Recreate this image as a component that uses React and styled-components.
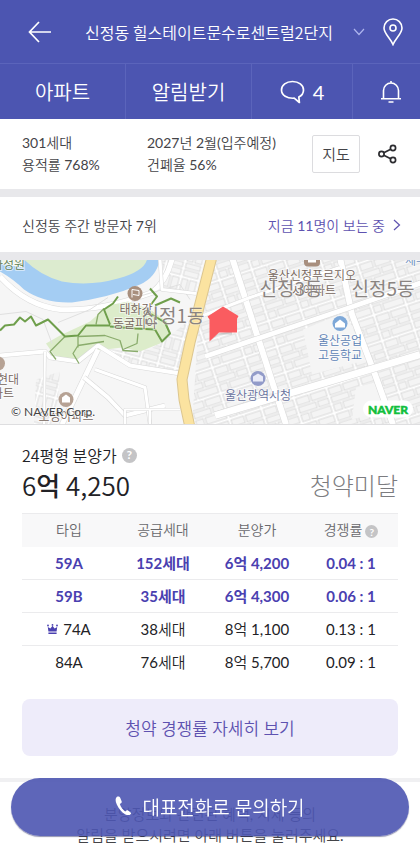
import React from "react";
import styled, { createGlobalStyle, css } from "styled-components";

const colors = {
  header: "#4c55b1",
  headerLine: "#5b64bb",
  primary: "#4a40b0",
  violet: "#5e52b0",
  text: "#444448",
  black: "#222226",
  gray: "#7c7c80",
  line: "#ebebed",
  band: "#e8e8eb"
};

const sans = `"Noto Sans CJK KR DemiLight", "Noto Sans CJK KR", sans-serif`;
const lato = `Lato, "Noto Sans CJK KR DemiLight", "Noto Sans CJK KR", sans-serif`;
const latoBold = `Lato, "Noto Sans CJK KR", sans-serif`;

const GlobalStyle = createGlobalStyle`
  * {
    box-sizing: border-box;
  }

  body {
    margin: 0;
    background: #fff;
    color: ${colors.black};
    font-family: ${lato};
    overflow-x: hidden;
  }

  button {
    font: inherit;
    color: inherit;
    padding: 0;
    border: 0;
    background: none;
    cursor: pointer;
  }

  a {
    color: inherit;
    text-decoration: none;
  }
`;

const Page = styled.div`
  height: 100vh;
  overflow: hidden;
`;

const Header = styled.header`
  background: ${colors.header};
  color: #fff;
  font-family: ${sans};
`;

const TitleBar = styled.div`
  display: flex;
  align-items: center;
  justify-content: space-between;
  height: 63px;
  padding: 0 16px 0 28px;
`;

const IconButton = styled.button`
  display: flex;
  align-items: center;
  justify-content: center;
`;

const TitleButton = styled.button`
  display: flex;
  align-items: center;
  gap: 20px;
  margin-left: 16px;
  font-size: 16px;
  line-height: 24px;
`;

const Tabs = styled.nav`
  display: grid;
  grid-template-columns: 125fr 126fr 101fr 68fr;
  height: 56px;
  border-top: 1px solid ${colors.headerLine};
`;

const Tab = styled.a`
  display: flex;
  align-items: center;
  justify-content: center;
  gap: 8px;
  padding-left: ${({ $last }) => ($last ? "8px" : 0)};
  font-size: 20px;
  font-family: ${({ $latin }) => ($latin ? lato : sans)};

  & + & {
    border-left: 1px solid ${colors.headerLine};
  }
`;

const Summary = styled.section`
  display: flex;
  align-items: center;
  height: 70px;
  padding: 0 22px;
  color: ${colors.text};
  font-size: 14px;
  line-height: 22px;
`;

const SummaryColumn = styled.div`
  flex: ${({ $grow }) => ($grow ? "1" : "0 0 125px")};
  white-space: nowrap;
`;

const MapButton = styled.button`
  width: 48px;
  height: 38px;
  margin-right: 18px;
  border: 1px solid #dcdcdf;
  border-radius: 2px;
  font-size: 15px;
`;

const Band = styled.div`
  height: 8px;
  background: ${colors.band};
`;

const Visitors = styled.section`
  display: flex;
  align-items: center;
  justify-content: space-between;
  height: 55px;
  padding: 0 19px 0 22px;
  color: ${colors.text};
  font-size: 14px;
`;

const ViewersLink = styled.a`
  display: flex;
  align-items: center;
  gap: 8px;
  color: ${colors.violet};
`;

const MapBox = styled.section`
  height: 165px;
  border-bottom: 1px solid #dedee0;

  svg {
    display: block;
    width: 100%;
    height: 100%;
  }
`;

const Label = styled.text`
  font-family: ${sans};
  font-size: 12px;
  fill: ${({ $color }) => $color || "#75645b"};
  text-anchor: ${({ $anchor }) => $anchor || "middle"};
  paint-order: stroke;
  stroke: #fff;
  stroke-width: 2px;
  stroke-opacity: 0.6;
`;

const District = styled(Label)`
  font-family: "Noto Sans CJK KR", sans-serif;
  font-size: 19px;
  fill: #8a8481;
  stroke-opacity: 0.3;
`;

const Copyright = styled(Label)`
  font-family: ${lato};
  fill: #444;
  text-anchor: start;
`;

const NaverText = styled.text`
  font-family: Lato, sans-serif;
  font-size: 12px;
  font-weight: 900;
  fill: #12bf3d;
  stroke: #12bf3d;
  stroke-width: 0.5px;
  text-anchor: middle;
`;

const Pricing = styled.section`
  padding: 18px 22px 22px;
`;

const PriceTitle = styled.h2`
  display: flex;
  align-items: center;
  gap: 5px;
  margin: 0;
  font-family: ${sans};
  font-size: 16px;
  font-weight: 400;
  line-height: 24px;
`;

const HelpButton = styled.button`
  display: inline-flex;
  align-items: center;
  justify-content: center;
  width: ${({ $small }) => ($small ? "13px" : "15px")};
  height: ${({ $small }) => ($small ? "13px" : "15px")};
  margin-left: ${({ $small }) => ($small ? "3px" : 0)};
  border-radius: 50%;
  background: #c4c4c6;
  color: #fff;
  font-family: ${latoBold};
  font-size: ${({ $small }) => ($small ? "10px" : "12px")};
  font-weight: 700;
  line-height: 12px;
  vertical-align: middle;
`;

const PriceRow = styled.div`
  display: flex;
  align-items: center;
  justify-content: space-between;
  height: 34px;
  margin-bottom: 12px;
  font-family: ${sans};
  font-size: 26px;
`;

const Price = styled.p`
  margin: 0;

  b {
    font-family: "Noto Sans CJK KR", sans-serif;
    font-weight: 500;
  }
`;

const Status = styled.p`
  margin: 0;
  color: ${colors.gray};
  font-family: "Noto Sans CJK KR", sans-serif;
  font-size: 24px;
  font-weight: 300;
`;

const Table = styled.table`
  width: 100%;
  border-collapse: collapse;
  table-layout: fixed;
  font-size: 15px;
  line-height: 20px;
  text-align: center;
`;

const HeadCell = styled.th`
  height: 33px;
  padding: 0;
  border-top: 1px solid ${colors.line};
  background: #f8f8f9;
  color: #69696d;
  font-size: 14px;
  font-weight: 400;
`;

const Row = styled.tr`
  border-bottom: 1px solid ${colors.line};
  ${({ $strong }) =>
    $strong &&
    css`
      color: ${colors.primary};
      font-family: ${latoBold};
      font-weight: 700;
    `};

  &:last-child {
    border-bottom: 0;
  }
`;

const Cell = styled.td`
  height: 33px;
  padding: 0;

  svg {
    margin-right: 5px;
  }
`;

const DetailButton = styled.button`
  width: 100%;
  height: 57px;
  margin-top: 20px;
  border-radius: 8px;
  background: #eeecfa;
  color: ${colors.violet};
  font-size: 17px;
`;

const ThinBand = styled(Band)`
  height: 4px;
  background: #f0f0f2;
`;

const Notice = styled.p`
  margin: 0;
  padding-top: 22px;
  color: ${colors.text};
  font-size: 15px;
  line-height: 21px;
  text-align: center;
`;

const CallButton = styled.a`
  position: fixed;
  right: 11px;
  bottom: 9px;
  left: 11px;
  display: flex;
  align-items: center;
  justify-content: center;
  gap: 10px;
  height: 58px;
  padding-bottom: 2px;
  border-radius: 29px;
  background: rgba(76, 85, 177, 0.9);
  box-shadow: 0 1px 1px rgba(40, 44, 100, 0.5);
  color: #fff;
  font-size: 19px;
`;

const BackIcon = () => (
  <svg width="24" height="22" fill="none" stroke="#fff" strokeWidth="1.7">
    <path d="M11 1 1.500 11l9.500 10M1.500 11H23" />
  </svg>
);

const ChevronDown = () => (
  <svg width="12" height="8" fill="none" stroke="#aeb5ee" strokeWidth="1.2">
    <path d="m1 1 5 5.500L11 1" />
  </svg>
);

const PinIcon = () => (
  <svg width="22" height="28" fill="none" stroke="#fff" strokeWidth="1.600">
    <path d="M11 26.500C8.500 20.500 2 15.500 2 10a9 9 0 0 1 18 0c0 5.500-6.500 10.500-9 16.500Z" />
    <circle cx="11" cy="10" r="3" />
  </svg>
);

const ChatIcon = () => (
  <svg width="25" height="24" fill="none" stroke="#fff" strokeWidth="1.700">
    <path
      strokeLinejoin="round"
      d="M12.500 1.500c6.200 0 11 3.600 11 8.500 0 3.200-1.900 5.700-4.700 7l.6 5.500-5.200-4.300c-7.200.5-12.700-3-12.700-8.200 0-4.900 4.800-8.500 11-8.500Z"
    />
  </svg>
);

const BellIcon = () => (
  <svg width="22" height="24" fill="none" stroke="#fff" strokeWidth="1.600">
    <path d="M3.500 18.500v-8a7.500 7.500 0 0 1 15 0v8M1 18.800h20M11 3V1M8.500 22h5" />
  </svg>
);

const ShareIcon = () => (
  <svg width="20" height="20" fill="none" stroke="#2c2c30" strokeWidth="1.700">
    <circle cx="3.500" cy="10" r="2.600" />
    <circle cx="15" cy="4" r="2.600" />
    <circle cx="15" cy="16" r="2.600" />
    <path d="m5.800 8.800 6.900-3.600M5.800 11.200l6.900 3.600" />
  </svg>
);

const ChevronRight = () => (
  <svg width="8" height="12" fill="none" stroke="#5e52b0" strokeWidth="1.200">
    <path d="m1 1 5.500 5L1 11" />
  </svg>
);

const CrownIcon = () => (
  <svg width="11" height="11" fill={colors.primary}>
    <path d="M.8 3 3.400 4.600 5.500 1.800 7.600 4.600 10.200 3 9.600 7.500H1.400ZM1.400 8.500h8.200V10H1.400Z" />
    <circle cx="1" cy="1.500" r=".9" />
    <circle cx="5.500" cy=".9" r=".9" />
    <circle cx="10" cy="1.500" r=".9" />
  </svg>
);

const PhoneIcon = () => (
  <svg width="17" height="20" fill="#fff">
    <path d="M2 .8C.2 2 .2 5 1.800 8.500c1.800 4.200 5 8 8.700 9.900 2 1 4 1 5.300-.5.500-.6.300-1-.2-1.500l-2.500-1.900c-.6-.4-1.100-.4-1.600 0l-1.300 1C7.800 13.800 5.800 11 4.800 8l1.500-1c.5-.4.600-.9.400-1.500L5.200 1.800C4.700.6 3.200 0 2 .8Z" />
  </svg>
);

// [path, width] of the wider streets that cut through the blocks
const streets = [
  ["M232-2 286 165", 6],
  ["M340-2 352 55 375 115 393 165", 6],
  ["M205 97 261 78 350 48 425 22", 5],
  ["M215 156 262 142 420 95", 7],
  ["M198 58 250 38 340 8", 3],
  ["M0 96 45 92 50 98 78 102 98 86 130 106 180 114", 4],
  ["M98 90 62 165", 5],
  ["M45 92 44 165", 2],
  ["M84 118 108 138 125 156 165 146", 4],
  ["M160 0 162 30 196 34", 3],
  ["M95 110 145 128 150 165", 3],
  ["M125 165V150H180M150 150V165", 2]
];

const mainTrails =
  "M0 71 5 66 14 65 20 58 25 62 31 57 36 66 48 60 60 72 65 77 78 76 86 66 110 66M110 65 104 50 113 44 118 37M150 29 157 37 151 45M155 46 171 39 180 43M110 67 135 69 155 70 162 82 170 74 165 63 150 54";

const thinTrails =
  "M78 77 105 76 120 81 123 91 138 92M78 77V88M65 77 50 92 56 100M79 104 73 94 78 86 104 82M96 65 98 55 104 49M123 90 137 84 138 74";

const NaverMap = () => (
  <svg viewBox="0 0 420 165" preserveAspectRatio="xMidYMid slice">
    <defs>
      <pattern
        id="blocks"
        width="34"
        height="27"
        patternUnits="userSpaceOnUse"
        patternTransform="rotate(-18 210 80)"
      >
        <rect width="34" height="27" fill="#fff" />
        <g fill="#f4f4f4" stroke="#d2d2d2" strokeWidth=".8">
          <rect x="1" y="1" width="13" height="7" />
          <rect x="16" y="1" width="16" height="7" />
          <rect x="1" y="10" width="18" height="6" />
          <rect x="21" y="10" width="11" height="6" />
          <rect x="1" y="18" width="8" height="7" />
          <rect x="11" y="18" width="21" height="7" />
        </g>
      </pattern>
      <pattern
        id="lots"
        width="18"
        height="30"
        patternUnits="userSpaceOnUse"
        patternTransform="rotate(15)"
      >
        <rect width="18" height="30" fill="#fff" />
        <g fill="#f4f4f4" stroke="#d4d4d4" strokeWidth=".8">
          <rect x="1" y="1" width="6" height="12" />
          <rect x="9" y="1" width="7" height="12" />
          <rect x="1" y="15" width="15" height="5" />
          <rect x="1" y="22" width="15" height="6" />
        </g>
      </pattern>
    </defs>
    <rect width="420" height="165" fill="#f6f6f6" />
    <path d="M208-1H421V166H192L198 70Z" fill="url(#blocks)" />
    <path
      d="M162 0H204L196 34 164 30ZM170 76 190 60 180 114 130 106 100 88 122 91 150 90ZM36 120 60 112 56 165H34Z"
      fill="url(#lots)"
    />
    <path
      d="M303 70 345 53 368 100 312 115ZM356 128 378 122 390 150 352 160Z"
      fill="#f5f5f5"
    />
    <g fill="none">
      <path d="M0 17Q26 46 60 50 100 52 152 33 166 22 172 0" stroke="#dadada" strokeWidth="6" />
      <path d="M0 17Q26 46 60 50 100 52 152 33 166 22 172 0" stroke="#fff" strokeWidth="5" />
    </g>
    <path d="M0 0H160Q156 18 140 25 110 38 72 43 44 44 24 30 14 20 0 12Z" fill="#a4cdf3" />
    <path d="M24 0H147Q144 12 118 19 90 27 62 22 40 16 24 0Z" fill="#dcebcf" />
    <path d="M0 0H24L22 8 0 4Z" fill="#edf4e8" />
    <path
      d="M46 84 60 76 90 62 108 46 128 42 150 50 167 62 170 74 160 84 140 92 122 88 90 92 80 102 58 101Z"
      fill="#dcecca"
    />
    <g fill="none" strokeLinejoin="round">
      <path d="M0 55 26 52 43 60 52 84M58 63 90 50 108 38M125 50 142 36 180 25 190 40" stroke="#e0e0e0" />
      {streets.map(([d, width]) => (
        <g key={d}>
          <path d={d} stroke="#d8d8d8" strokeWidth={width + 1} />
          <path d={d} stroke="#fff" strokeWidth={width} />
        </g>
      ))}
      <path d={thinTrails} stroke="#8aac6c" strokeWidth="1.300" />
      <path d={mainTrails} stroke="#6f9f4c" strokeWidth="2" />
      <path d="M212-3 190 83 182 120 184 140 190 168" stroke="#dcc68f" strokeWidth="11" />
      <path d="M212-3 190 83 182 120 184 140 190 168" stroke="#fbe3a0" strokeWidth="9" />
    </g>

    <circle cx="135" cy="34" r="7.500" fill="#a88f7e" />
    <path d="M132 38V30l7 1v5l-6-1" fill="none" stroke="#fff" />
    <circle cx="66" cy="140" r="7.500" fill="#b6a294" />
    <path d="M62 143v-5l4-3 4 3v5Z" fill="#fff" />
    <circle cx="-2" cy="104" r="7" fill="#b6a294" />
    <path d="M304-2V3q0 4 4 4h8q4 0 4-4V-2Z" fill="#a88f7e" />
    <path d="M308-2V3h8V-2Z" fill="#fff" />
    <circle cx="340" cy="64" r="7.500" fill="#7ea8d8" />
    <path d="M335 68v-4l5-4 5 4v4Z" fill="#fff" />
    <circle cx="258" cy="119" r="7.500" fill="#929bc9" />
    <path d="M253 122v-5l5-3 5 3v5Z" fill="#e9ebf8" />

    <Label x="25" y="9" $anchor="end" $color="#5e7d54">화성원</Label>
    <Label x="136" y="54">태화강</Label>
    <Label x="135" y="68">동굴피아</Label>
    <Label x="19" y="124" $anchor="end">현대</Label>
    <Label x="14" y="138" $anchor="end">아파트</Label>
    <Label x="66" y="161">오성아파트</Label>
    <Label x="312" y="20">울산신정푸르지오</Label>
    <Label x="336" y="35" $anchor="end">시아파트</Label>
    <Label x="405" y="5" $anchor="start" $color="#6a8fc0">세무</Label>
    <Label x="340" y="85" $color="#5b7fb5">울산공업</Label>
    <Label x="340" y="100" $color="#5b7fb5">고등학교</Label>
    <Label x="258" y="140" $color="#66709c">울산광역시청</Label>
    <District x="173" y="63">신정1동</District>
    <District x="291" y="36">신정3동</District>
    <District x="383" y="36">신정5동</District>

    <path d="M210 82 218 75h14v-3l-14 2Z" fill="#888" opacity=".35" />
    <path d="m223 47 15.500 9.500-1.500 3V73h-18l-9.500 9V60l-2-3Z" fill="#fa5c60" />

    <Copyright x="11" y="156">© NAVER Corp.</Copyright>
    <rect x="363" y="141" width="50" height="17" rx="8.500" fill="#fff" />
    <NaverText x="388" y="154">NAVER</NaverText>
  </svg>
);

const types = [
  { type: "59A", supply: "152세대", price: "6억 4,200", rate: "0.04 : 1", strong: true },
  { type: "59B", supply: "35세대", price: "6억 4,300", rate: "0.06 : 1", strong: true },
  { type: "74A", supply: "38세대", price: "8억 1,100", rate: "0.13 : 1", crown: true },
  { type: "84A", supply: "76세대", price: "8억 5,700", rate: "0.09 : 1" }
];

const App = () => (
  <Page>
    <GlobalStyle />
    <Header>
      <TitleBar>
        <IconButton aria-label="뒤로">
          <BackIcon />
        </IconButton>
        <TitleButton>
          신정동 힐스테이트문수로센트럴2단지
          <ChevronDown />
        </TitleButton>
        <IconButton aria-label="위치">
          <PinIcon />
        </IconButton>
      </TitleBar>
      <Tabs>
        <Tab href="#apt">아파트</Tab>
        <Tab href="#alarm">알림받기</Tab>
        <Tab href="#talk" $latin>
          <ChatIcon />4
        </Tab>
        <Tab href="#bell" aria-label="알림" $last>
          <BellIcon />
        </Tab>
      </Tabs>
    </Header>

    <Summary>
      <SummaryColumn>
        301세대
        <br />
        용적률 768%
      </SummaryColumn>
      <SummaryColumn $grow>
        2027년 2월(입주예정)
        <br />
        건폐율 56%
      </SummaryColumn>
      <MapButton>지도</MapButton>
      <IconButton aria-label="공유">
        <ShareIcon />
      </IconButton>
    </Summary>
    <Band />
    <Visitors>
      <span>신정동 주간 방문자 7위</span>
      <ViewersLink href="#viewers">
        지금 11명이 보는 중
        <ChevronRight />
      </ViewersLink>
    </Visitors>
    <Band />

    <MapBox>
      <NaverMap />
    </MapBox>

    <Pricing>
      <PriceTitle>
        24평형 분양가
        <HelpButton>?</HelpButton>
      </PriceTitle>
      <PriceRow>
        <Price>
          6<b>억</b> 4,250
        </Price>
        <Status>청약미달</Status>
      </PriceRow>
      <Table>
        <thead>
          <tr>
            <HeadCell>타입</HeadCell>
            <HeadCell>공급세대</HeadCell>
            <HeadCell>분양가</HeadCell>
            <HeadCell>
              경쟁률
              <HelpButton $small>?</HelpButton>
            </HeadCell>
          </tr>
        </thead>
        <tbody>
          {types.map(({ type, supply, price, rate, strong, crown }) => (
            <Row key={type} $strong={strong}>
              <Cell>
                {crown && <CrownIcon />}
                {type}
              </Cell>
              <Cell>{supply}</Cell>
              <Cell>{price}</Cell>
              <Cell>{rate}</Cell>
            </Row>
          ))}
        </tbody>
      </Table>
      <DetailButton>청약 경쟁률 자세히 보기</DetailButton>
    </Pricing>
    <ThinBand />
    <Notice>
      분양정보와 관련된 혜택, 시세 등의
      <br />
      알림을 받으시려면 아래 버튼을 눌러주세요.
    </Notice>

    <CallButton href="#call">
      <PhoneIcon />
      대표전화로 문의하기
    </CallButton>
  </Page>
);

export default App;
